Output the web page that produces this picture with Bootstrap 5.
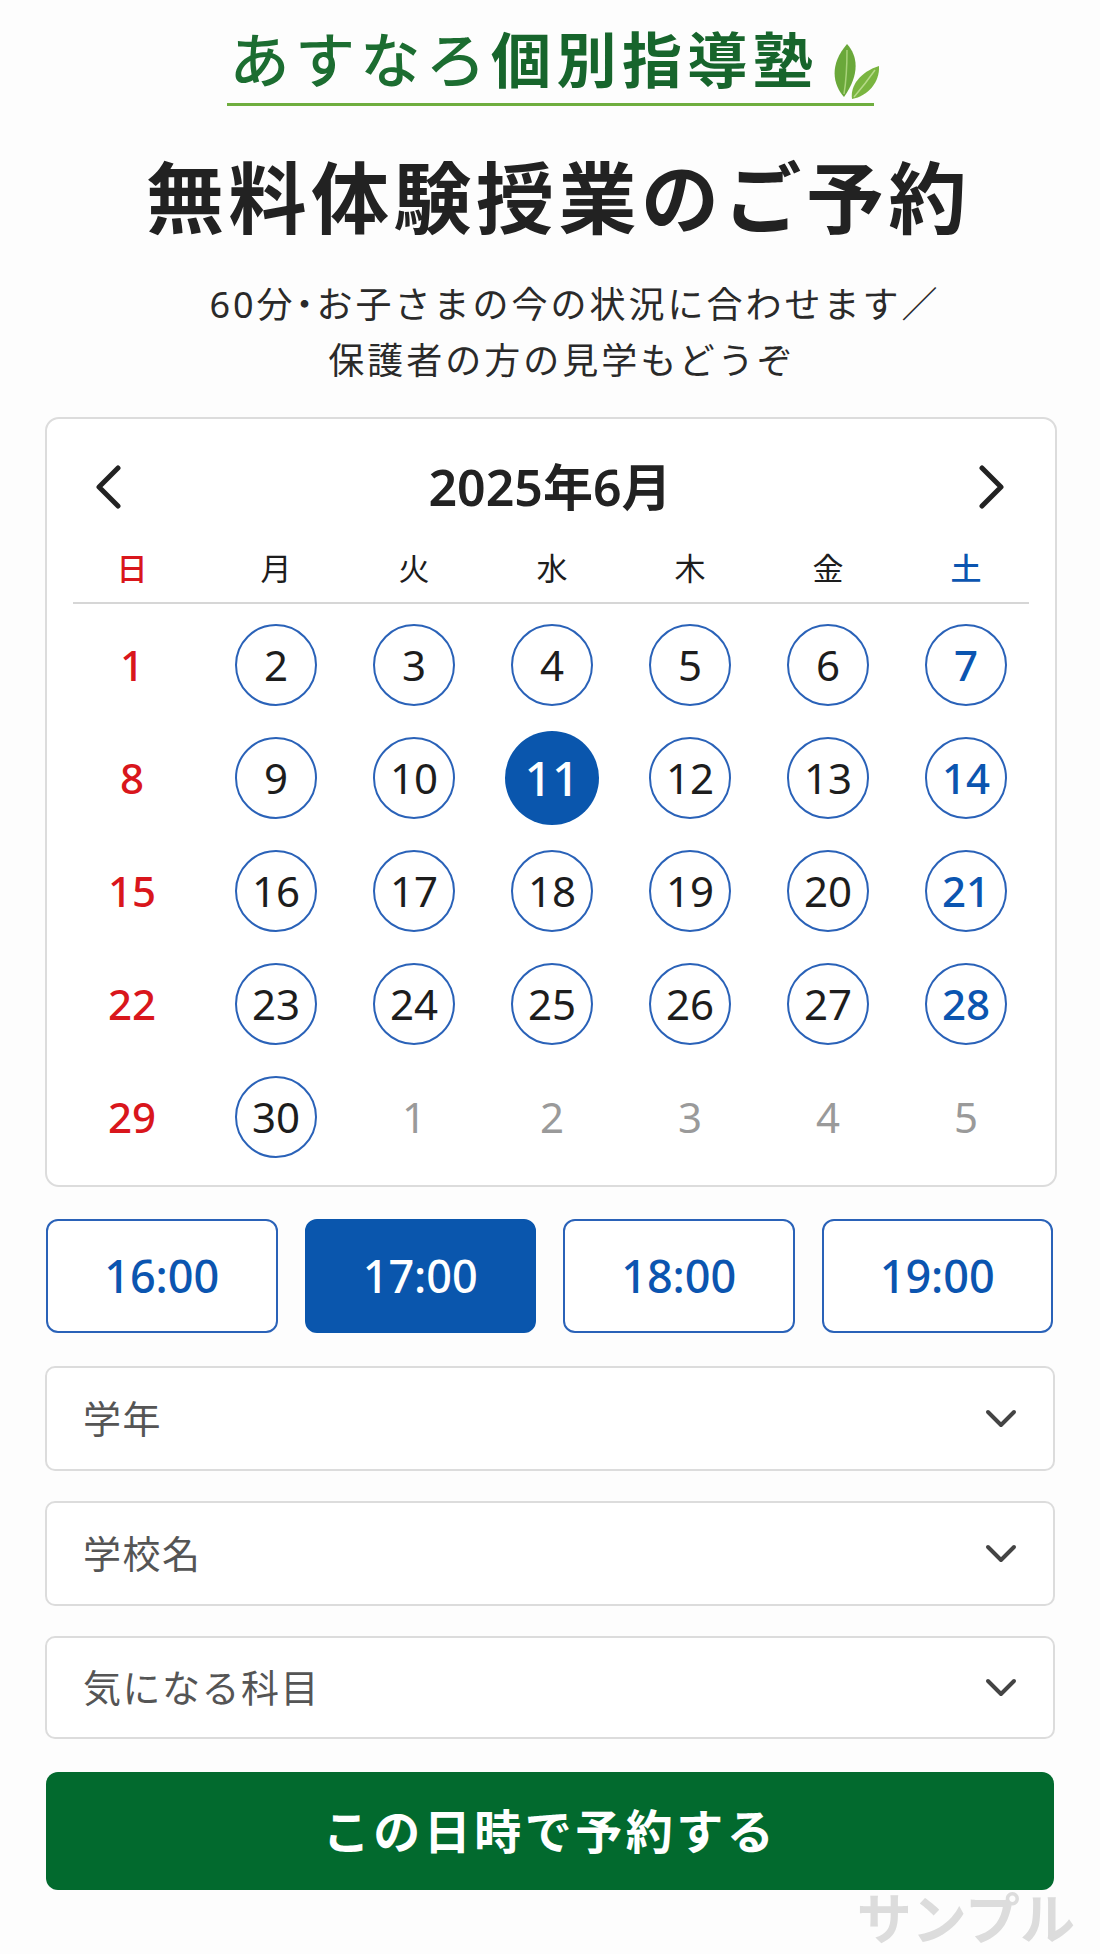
<!DOCTYPE html>
<html lang="ja">
<head>
    <meta charset="UTF-8">
    <meta name="viewport" content="width=device-width, initial-scale=1.0">
    <title>無料体験授業のご予約</title>
    <link href="https://cdn.jsdelivr.net/npm/bootstrap@5.3.3/dist/css/bootstrap.min.css" rel="stylesheet">
    <style>
        body {
            background: #fdfdfd;
            color: #1d1d1d;
            font-family: "Noto Sans", "Noto Sans CJK JP", sans-serif;
            height: 1954px;
            overflow: hidden;
        }
        .page-wrap { padding: 0 45px; height: 1954px; }

        /* ロゴ */
        .logo-box {
            width: 647px;
            height: 106px;
            padding: 0 0 13px 3px;
            border-bottom: 3px solid #6fae3f;
        }
        .logo-name {
            color: #1c6d31;
            font-family: "Noto Sans CJK JP", sans-serif;
            font-size: 60px;
            font-weight: 500;
            letter-spacing: 5.4px;
            line-height: 66px;
            white-space: nowrap;
        }
        .logo-name b { font-weight: 700; color: #17652c; }
        .logo-leaf { margin: 0 -12px -10px 12px; flex-shrink: 0; }

        .main-title {
            font-family: "Noto Sans CJK JP", sans-serif;
            font-size: 78px;
            font-weight: 700;
            letter-spacing: 4.5px;
            line-height: 92px;
            margin: 42px 0 0;
            padding-left: 17px;
            color: #222;
        }
        .sub-title {
            font-size: 36px;
            letter-spacing: 3px;
            line-height: 56px;
            margin: 37px 0 28px;
            padding-left: 24px;
            color: #2a2a2a;
        }
        .sub-first { padding-left: 26px; }
        .sub-dot { font-feature-settings: "palt"; }

        /* カレンダー */
        .cal-box {
            background: #fff;
            border: 2px solid #dcdcdc;
            border-radius: 14px;
            margin-right: -2px;
            padding: 38px 0 12px 16px;
        }
        .cal-head { height: 60px; padding: 0 50px 0 32px; }
        .cal-month { font-size: 50px; font-weight: 600; color: #222; }
        .cal-grid { display: grid; grid-template-columns: 144px repeat(6, 138px); }
        .week-row { font-size: 31px; line-height: 40px; margin-top: 31px; padding-bottom: 14px; }
        .cal-line { border-top: 2px solid #d6d6d6; margin: 0 26px 4px 10px; }
        .day-cell { height: 113px; font-size: 42px; }
        .cal-grid > div:nth-child(7n+1) { padding-right: 6px; }
        .day-ring {
            width: 82px;
            height: 82px;
            border: 2px solid #2a62b8;
        }
        .day-now {
            width: 94px;
            height: 94px;
            background: #0a56ad;
            color: #fff;
            font-size: 48px;
            font-weight: 500;
        }
        .c-sun { color: #d9161c; font-weight: 500; }
        .c-sat { color: #0b55b0; font-weight: 500; }
        .c-next { color: #9a9a9a; }

        /* 時間 */
        .time-row { margin-top: 32px; padding: 0 2px 0 1px; gap: 27px; }
        .time-btn {
            flex: 1 1 0;
            height: 114px;
            font-size: 45px;
            font-weight: 500;
            color: #0b55b0;
            background: #fff;
            border: 2px solid #2a62b8;
            border-radius: 12px;
        }
        .time-btn.active, .time-btn:hover { background: #0a56ad; border-color: #0a56ad; color: #fff; }

        /* 選択 */
        .pick-box {
            height: 105px;
            margin-top: 30px;
            padding: 0 36px;
            font-size: 38px;
            letter-spacing: 1.5px;
            color: #555;
            background-color: #fff;
            border: 2px solid #dcdcdc;
            border-radius: 10px;
            background-position: right 36px center;
            background-size: 32px 20px;
            background-image: url("data:image/svg+xml,%3csvg xmlns='http://www.w3.org/2000/svg' viewBox='0 0 32 20'%3e%3cpath fill='none' stroke='%23444' stroke-width='4' stroke-linecap='round' stroke-linejoin='round' d='M3 3l13 13L29 3'/%3e%3c/svg%3e");
        }
        .time-row + .pick-box { margin-top: 33px; }
        .pick-last { height: 103px; }
        .go-btn {
            display: block;
            width: calc(100% - 2px);
            height: 118px;
            margin: 33px 1px 0;
            font-size: 47px;
            font-weight: 600;
            letter-spacing: 3.5px;
            background: #026a2e;
            border: 0;
            border-radius: 12px;
        }
        .go-btn:hover { background: #015a27; }

        .stamp {
            position: absolute;
            right: 25px;
            bottom: 6px;
            font-family: "Liberation Sans", "Noto Sans CJK JP", sans-serif;
            font-size: 55px;
            font-weight: 700;
            line-height: 56px;
            color: #dcdcdc;
        }
    </style>
</head>
<body class="position-relative">

    <main class="page-wrap">
        <!-- ロゴ -->
        <div class="d-flex justify-content-center">
            <div class="logo-box d-flex align-items-end">
                <span class="logo-name">あすなろ<b>個別指導塾</b></span>
                <svg class="logo-leaf" width="50" height="56" viewBox="0 0 50 56">
                    <path d="M17 0C28 12 30 30 14 53C4 42 -2 22 17 0Z" fill="#6aa83a"/>
                    <path d="M17 6C17 22 16 38 14 50" fill="none" stroke="#a8d27a" stroke-width="1.5"/>
                    <path d="M49 22C50 38 38 52 22 55C20 42 30 28 49 22Z" fill="#7ab540"/>
                    <path d="M45 26C38 36 30 46 24 53" fill="none" stroke="#b6da88" stroke-width="1.5"/>
                </svg>
            </div>
        </div>

        <h1 class="main-title text-center">無料体験授業のご予約</h1>
        <p class="sub-title text-center">
            <span class="sub-first d-block">60分<span class="sub-dot">・</span>お子さまの今の状況に合わせます／</span>
            <span class="d-block">保護者の方の見学もどうぞ</span>
        </p>

        <!-- カレンダー -->
        <section class="cal-box">
            <div class="cal-head d-flex justify-content-between align-items-center">
                <svg width="26" height="44" viewBox="0 0 26 44"><path d="M23 3L4 22l19 19" fill="none" stroke="#222" stroke-width="5" stroke-linecap="round" stroke-linejoin="round"/></svg>
                <span class="cal-month">2025年6月</span>
                <svg width="26" height="44" viewBox="0 0 26 44"><path d="M3 3l19 19L3 41" fill="none" stroke="#222" stroke-width="5" stroke-linecap="round" stroke-linejoin="round"/></svg>
            </div>
            <div class="cal-grid week-row text-center">
                <div class="c-sun">日</div><div>月</div><div>火</div><div>水</div><div>木</div><div>金</div><div class="c-sat">土</div>
            </div>
            <div class="cal-line"></div>
            <div class="cal-grid" id="dayGrid"></div>
        </section>

        <!-- 時間 -->
        <div class="time-row d-flex">
            <button class="btn time-btn">16:00</button>
            <button class="btn time-btn active">17:00</button>
            <button class="btn time-btn">18:00</button>
            <button class="btn time-btn">19:00</button>
        </div>

        <select class="form-select pick-box"><option>学年</option></select>
        <select class="form-select pick-box"><option>学校名</option></select>
        <select class="form-select pick-box pick-last"><option>気になる科目</option></select>

        <button class="btn btn-success go-btn text-white">この日時で予約する</button>
    </main>

    <div class="stamp">サンプル</div>

    <script>
        // 6月のマス + 7月の頭
        const grid = document.getElementById("dayGrid");
        for (let i = 0; i < 35; i++) {
            const day = i < 30 ? i + 1 : i - 29;
            const col = i % 7;
            let cls = "";
            if (i >= 30) cls = "c-next";
            else if (col === 0) cls = "c-sun";
            else if (day === 11) cls = "day-now rounded-circle d-flex align-items-center justify-content-center";
            else cls = "day-ring rounded-circle d-flex align-items-center justify-content-center" + (col === 6 ? " c-sat" : "");
            grid.innerHTML += `<div class="day-cell d-flex align-items-center justify-content-center"><span class="${cls}">${day}</span></div>`;
        }
    </script>
</body>
</html>
